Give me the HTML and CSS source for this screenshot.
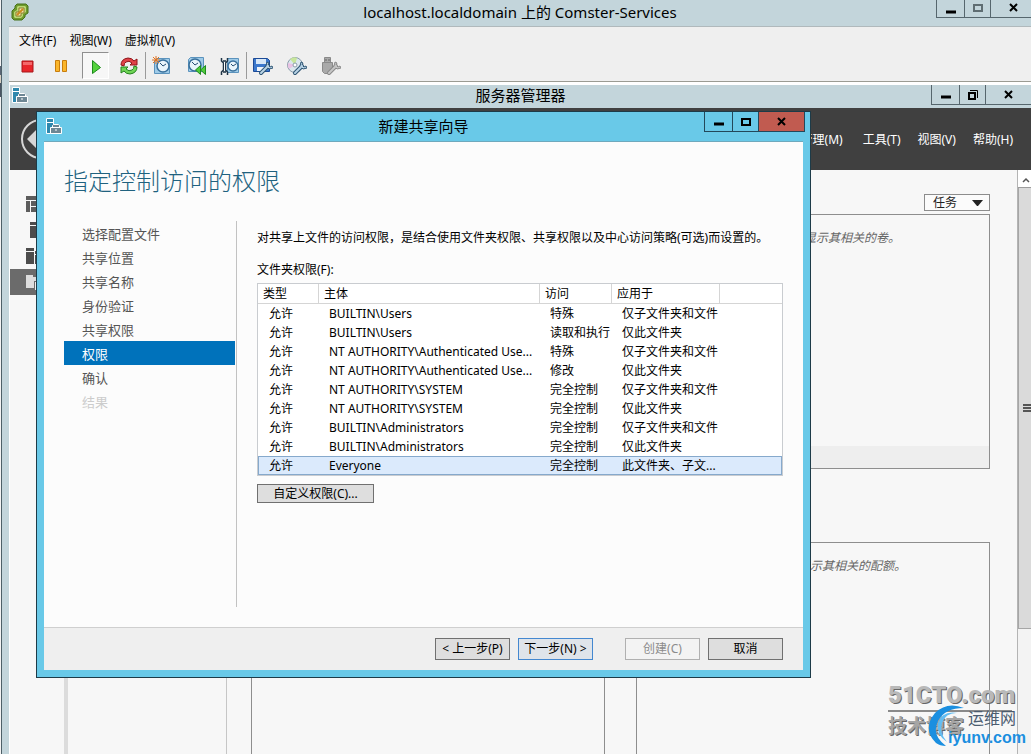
FILE: index.html
```html
<!DOCTYPE html>
<html lang="zh-CN">
<head>
    <meta charset="UTF-8">
    <title>localhost.localdomain 上的 Comster-Services</title>
    <link rel="stylesheet" href="styles.css">
</head>
<body>
<div class="console">
    <header class="titlebar console-title">
        <svg class="app-icon" width="18" height="18" viewBox="0 0 18 18">
            <path d="M6 1h9l2 2v7l-3 2v2l-3 3H3l-2-2V8l3-3V3z" fill="#6f9a2c" stroke="#47731b"/>
            <path d="M7 3h7l1 1v5l-3 2v2l-2 2H4l-1-1V9l3-2V4z" fill="#b9d873"/>
            <path d="M8 5h5v5h-3v3H5V9h3z" fill="#fbe9b0" stroke="#8a7a2a"/>
            <path d="M6 12l6-6" stroke="#c98a1d" stroke-width="2"/>
        </svg>
        <h1>localhost.localdomain 上的 Comster-Services</h1>
        <div class="win-buttons cut">
            <button aria-label="最小化"><svg width="12" height="12"><path d="M1 9h10" stroke="#000" stroke-width="3"/></svg></button>
            <button aria-label="最大化"><svg width="12" height="12"><path d="M2 2h8v6H2z" fill="none" stroke="#5f6d72" stroke-width="2"/></svg></button>
            <button aria-label="关闭"><svg width="12" height="12"><path d="M2 1l7 7M9 1L2 8" stroke="#000" stroke-width="2"/></svg></button>
        </div>
    </header>

    <nav class="menu">
        <a href="#">文件(F)</a>
        <a href="#">视图(W)</a>
        <a href="#">虚拟机(V)</a>
    </nav>

    <div class="toolbar">
        <div class="tools">
            <button aria-label="关机">
                <svg width="20" height="20"><path d="M5 5h11v11H5z" fill="#e8262b" stroke="#a8171b"/><path d="M6 6h9v3H6z" fill="#f4686a"/></svg>
            </button>
            <button aria-label="挂起">
                <svg width="20" height="20"><path d="M4.500 4.500h4v11h-4zM11.500 4.500h4v11h-4z" fill="#fbb62b" stroke="#c87d0c"/></svg>
            </button>
            <button class="pressed" aria-label="开机">
                <svg width="20" height="20"><path d="M7.500 4.500l8 7-8 6z" fill="#53d23c" stroke="#1c8a1b"/></svg>
            </button>
            <button aria-label="重启">
                <svg width="20" height="20">
                    <path d="M2 9q0-6 7-7 4 0 6 3l3-2v6h-7l2-2q-3-3-6-1-2 1-2 4z" fill="#e04247" stroke="#8f1418"/>
                    <path d="M18 11q0 6-7 7-4 0-6-3l-3 2v-6h7l-2 2q3 3 6 1 2-1 2-4z" fill="#6fd455" stroke="#23821f"/>
                </svg>
            </button>
        </div>
        <div class="tools">
            <button aria-label="创建快照">
                <svg width="20" height="20">
                    <path d="M4.500 2.500h13v15h-15v-13z" fill="#9fcbe8" stroke="#5b93bd"/>
                    <circle cx="11" cy="10" r="6" fill="#e8f4fb" stroke="#39709c" stroke-width="1.500"/>
                    <path d="M8 7l3 3 3-2" fill="none" stroke="#274f73"/>
                    <path d="M4 0v8M0 4h8M1 1l6 6M7 1L1 7" stroke="#e5731c"/>
                </svg>
            </button>
            <button aria-label="恢复快照">
                <svg width="20" height="20">
                    <path d="M4.500 1.500h13v14h-15v-12z" fill="#9fcbe8" stroke="#5b93bd"/>
                    <circle cx="9" cy="9" r="6" fill="#e8f4fb" stroke="#39709c" stroke-width="1.500"/>
                    <path d="M6 6l3 3 3-2" fill="none" stroke="#274f73"/>
                    <path d="M14.500 9.500v9l-5-4.500zM19.500 9.500v9l-5-4.500z" fill="#4fcc3c" stroke="#1f8a1e"/>
                </svg>
            </button>
            <button aria-label="快照管理器">
                <svg width="20" height="20">
                    <path d="M7.500 2.500h11v14h-11z" fill="#9fcbe8" stroke="#5b93bd"/>
                    <circle cx="13" cy="10" r="5" fill="#e8f4fb" stroke="#39709c" stroke-width="1.500"/>
                    <path d="M11 8l2 2 3-2" fill="none" stroke="#274f73"/>
                    <path d="M1.500 2v3l2 2v7l-2 2v3M7.500 2v3l-2 2v7l2 2v3M3 5h3M3 16h3" fill="none" stroke="#1f3446" stroke-width="1.500"/>
                    <path d="M4 6h1v9H4z" fill="#fff"/>
                </svg>
            </button>
        </div>
        <div class="tools">
            <button aria-label="软盘">
                <svg width="20" height="20">
                    <path d="M.500 2.500h14l2 2v11H.500z" fill="#3c78cc" stroke="#1c4a96"/>
                    <path d="M3 3h10v5H3z" fill="#d8e8f8"/><path d="M4 11h7v4H4z" fill="#eef4fa"/>
                    <path d="M8 17l7-7" stroke="#2f5674" stroke-width="4" stroke-linecap="round"/>
                    <path d="M14 6l-1 4 3 3 4-1-1-2-2 1-2-2 1-2z" fill="#b9d3e6" stroke="#2f5674"/>
                    <path d="M8 17l7-7" stroke="#b9d3e6" stroke-width="2" stroke-linecap="round"/>
                </svg>
            </button>
            <button aria-label="光盘">
                <svg width="20" height="20">
                    <circle cx="8" cy="9" r="7.500" fill="#dbe7ee" stroke="#8a9caa"/>
                    <path d="M8 9L3 3q4-3 7-1z" fill="#c8e69c"/><path d="M8 9l-6 4q-2-3-1-6z" fill="#e9c3e4"/>
                    <circle cx="8" cy="9" r="2" fill="#fff" stroke="#8a9caa"/>
                    <path d="M8 17l7-7" stroke="#2f5674" stroke-width="4" stroke-linecap="round"/>
                    <path d="M14 6l-1 4 3 3 4-1-1-2-2 1-2-2 1-2z" fill="#b9d3e6" stroke="#2f5674"/>
                    <path d="M8 17l7-7" stroke="#b9d3e6" stroke-width="2" stroke-linecap="round"/>
                </svg>
            </button>
            <button aria-label="USB" disabled>
                <svg width="20" height="20">
                    <path d="M3.500 1.500h6v5h-6zM1.500 6.500h10v9h-3l-2 2h-3l-2-2z" fill="#a9a9a9" stroke="#8a8a8a"/>
                    <path d="M5 3v2M8 3v2" stroke="#666"/>
                    <path d="M8 17l7-7" stroke="#8a8a8a" stroke-width="4" stroke-linecap="round"/>
                    <path d="M14 6l-1 4 3 3 4-1-1-2-2 1-2-2 1-2z" fill="#c6c6c6" stroke="#8a8a8a"/>
                    <path d="M8 17l7-7" stroke="#c6c6c6" stroke-width="2" stroke-linecap="round"/>
                </svg>
            </button>
        </div>
    </div>

    <!-- 虚拟机桌面 -->
    <div class="desktop">
        <header class="titlebar manager-title">
            <svg class="app-icon" width="16" height="16" viewBox="0 0 16 16">
                <path d="M.500.500h7v15h-7z" fill="#2f88ad" stroke="#fff"/><path d="M1 4.500h6" stroke="#fff"/>
                <path d="M4.500 9.500h11v6h-11z" fill="#6e8794" stroke="#fff"/>
                <path d="M6.500 9V7.500l1-1h5l1 1V9" fill="#6e8794" stroke="#fff"/><path d="M9 12h2" stroke="#fff"/>
            </svg>
            <h2>服务器管理器</h2>
            <div class="win-buttons">
                <button aria-label="最小化"><svg width="12" height="12"><path d="M1 8h10" stroke="#000" stroke-width="3"/></svg></button>
                <button aria-label="还原"><svg width="12" height="12"><path d="M2 4h6v6H2z" fill="none" stroke="#000" stroke-width="2"/><path d="M3 1.500h7.500V9" fill="none" stroke="#000"/></svg></button>
                <button aria-label="关闭"><svg width="12" height="12"><path d="M2 2l7 7M9 2L2 9" stroke="#000" stroke-width="2"/></svg></button>
            </div>
        </header>

        <div class="manager-head">
            <button class="back" aria-label="后退">
                <svg width="42" height="42"><circle cx="21" cy="21" r="19" fill="none" stroke="#d6d6d6" stroke-width="2"/><path d="M7 21l10-10v7h17v6H17v7z" fill="#d6d6d6"/></svg>
            </button>
            <nav class="manager-menu">
                <a href="#">管理(M)</a>
                <div class="menu-group">
                    <a href="#">工具(T)</a>
                    <a href="#">视图(V)</a>
                    <a href="#">帮助(H)</a>
                </div>
            </nav>
        </div>

        <div class="manager-body">
            <ul class="side">
                <li><svg width="16" height="16"><path d="M0 0h16v4H0zM0 5h4v11H0zM5 5h11v5H5zM5 11h11v5H5z" fill="#5c5c5c"/></svg></li>
                <li><svg width="16" height="16"><path d="M4 0h10v3H4zM4 4h10v12H4z" fill="#4c4c4c"/></svg></li>
                <li><svg width="16" height="16"><path d="M0 0h8v3H0zM0 4h8v12H0zM9 3h7v3H9zM9 7h7v9H9z" fill="#4c4c4c"/></svg></li>
                <li class="current"><svg width="16" height="16"><path d="M0 1h7v2h5v4H8v7H0z" fill="#ddd"/><path d="M9 8h7v8H9z" fill="#eee"/></svg></li>
            </ul>
            <div class="subnav"></div>
            <main class="tiles">
                <section class="tile"></section>
                <section class="tile">
                    <div class="tasks">
                        <select aria-label="任务"><option>任务</option></select>
                        <svg width="11" height="6"><path d="M0 0h11L6 6H5z" fill="#222"/></svg>
                    </div>
                    <div class="pane">
                        <p>显示其相关的卷。</p>
                        <div class="pane-foot"></div>
                    </div>
                </section>
                <section class="tile open"><div class="pane"></div></section>
                <section class="tile open"><div class="pane"><p>显示其相关的配额。</p></div></section>
            </main>
            <div class="scroll">
                <div class="scroll-up"><svg width="8" height="6"><path d="M1 5l3-3 3 3" fill="none" stroke="#555" stroke-width="1.500"/></svg></div>
                <div class="thumb"><svg width="8" height="9"><path d="M0 1h8M0 4h8M0 7h8" stroke="#555" stroke-width="2"/></svg></div>
            </div>
        </div>

        <!-- 新建共享向导 -->
        <div class="dialog" role="dialog" aria-labelledby="wizard-title">
            <header class="titlebar dialog-title">
                <svg class="app-icon" width="16" height="16" viewBox="0 0 16 16">
                    <path d="M.500.500h7v15h-7z" fill="#2f88ad" stroke="#fff"/><path d="M1 4.500h6" stroke="#fff"/>
                    <path d="M4.500 9.500h11v6h-11z" fill="#6e8794" stroke="#fff"/>
                    <path d="M6.500 9V7.500l1-1h5l1 1V9" fill="#6e8794" stroke="#fff"/><path d="M9 12h2" stroke="#fff"/>
                </svg>
                <h2 id="wizard-title">新建共享向导</h2>
                <div class="win-buttons">
                    <button aria-label="最小化"><svg width="12" height="12"><path d="M1 8h10" stroke="#000" stroke-width="3"/></svg></button>
                    <button aria-label="最大化"><svg width="12" height="12"><path d="M2 3h8v6H2z" fill="none" stroke="#000" stroke-width="2"/></svg></button>
                    <button class="close" aria-label="关闭"><svg width="12" height="12"><path d="M2 2l7 7M9 2L2 9" stroke="#000" stroke-width="2"/></svg></button>
                </div>
            </header>
            <div class="dialog-body">
                <h3>指定控制访问的权限</h3>
                <div class="wizard">
                    <ol class="steps">
                        <li>选择配置文件</li>
                        <li>共享位置</li>
                        <li>共享名称</li>
                        <li>身份验证</li>
                        <li>共享权限</li>
                        <li class="current">权限</li>
                        <li>确认</li>
                        <li class="disabled">结果</li>
                    </ol>
                    <div class="page">
                        <p>对共享上文件的访问权限，是结合使用文件夹权限、共享权限以及中心访问策略(可选)而设置的。</p>
                        <p id="perm-label" class="label">文件夹权限(F):</p>
                        <table class="perms" aria-labelledby="perm-label">
                            <colgroup><col class="c-type"><col><col class="c-access"><col class="c-apply"><col class="c-rest"></colgroup>
                            <thead>
                            <tr><th>类型</th><th>主体</th><th>访问</th><th>应用于</th><th></th></tr>
                            </thead>
                            <tbody>
                            <tr><td>允许</td><td>BUILTIN\Users</td><td>特殊</td><td>仅子文件夹和文件</td><td></td></tr>
                            <tr><td>允许</td><td>BUILTIN\Users</td><td>读取和执行</td><td>仅此文件夹</td><td></td></tr>
                            <tr><td>允许</td><td>NT AUTHORITY\Authenticated Use...</td><td>特殊</td><td>仅子文件夹和文件</td><td></td></tr>
                            <tr><td>允许</td><td>NT AUTHORITY\Authenticated Use...</td><td>修改</td><td>仅此文件夹</td><td></td></tr>
                            <tr><td>允许</td><td>NT AUTHORITY\SYSTEM</td><td>完全控制</td><td>仅子文件夹和文件</td><td></td></tr>
                            <tr><td>允许</td><td>NT AUTHORITY\SYSTEM</td><td>完全控制</td><td>仅此文件夹</td><td></td></tr>
                            <tr><td>允许</td><td>BUILTIN\Administrators</td><td>完全控制</td><td>仅子文件夹和文件</td><td></td></tr>
                            <tr><td>允许</td><td>BUILTIN\Administrators</td><td>完全控制</td><td>仅此文件夹</td><td></td></tr>
                            <tr class="selected"><td>允许</td><td>Everyone</td><td>完全控制</td><td>此文件夹、子文...</td><td></td></tr>
                            </tbody>
                        </table>
                        <button class="btn custom">自定义权限(C)...</button>
                    </div>
                </div>
            </div>
            <footer class="dialog-foot">
                <div class="btn-pair">
                    <button class="btn">&lt; 上一步(P)</button>
                    <button class="btn default">下一步(N) &gt;</button>
                </div>
                <div class="btn-pair">
                    <button class="btn" disabled>创建(C)</button>
                    <button class="btn">取消</button>
                </div>
            </footer>
        </div>
    </div>
</div>

<!-- 水印 -->
<div class="watermark">
    <div class="mark-name">51CTO.com</div>
    <div class="mark-blog">技术博客</div>
    <svg class="swoosh" width="40" height="42">
        <path d="M37 3Q20-4 8 8Q-5 24 9 38Q13 41 19 41Q4 30 11 16Q18 3 37 3z" fill="#1b8fe0"/>
        <path d="M31 8Q19 7 15 18Q12 28 20 37Q9 30 11 18Q15 5 31 8z" fill="#63bdf2"/>
    </svg>
    <div class="mark-site">运维网</div>
    <div class="mark-url">iyunv.com</div>
</div>
</body>
</html>
```
FILE: styles.css
```css
* {
    margin: 0;
    padding: 0;
    box-sizing: border-box;
}

body {
    height: 100vh;
    padding-left: 1px;
    overflow: hidden;
    font-family: "Noto Sans", "Noto Sans CJK SC", sans-serif;
    font-size: 12px;
    line-height: 18px;
    color: #000;
    background: linear-gradient(#f4f4f4 66px, #5a6675 66px, #5a6675 75px, #d8d2c4 75px, #d8d2c4 83px, #4a5563 83px, #4a5563 97px, #f4f4f4 97px);
}

svg {
    display: block;
}

a {
    color: inherit;
    text-decoration: none;
}

ul, ol {
    list-style: none;
}

button {
    font: inherit;
    color: inherit;
    background: none;
    border: none;
}

/* 控制台窗口 */
.console {
    height: 100%;
    border-left: 1px solid #4e6068;
    padding-left: 7px;
    background: #c3d5db;
    display: flex;
    flex-direction: column;
}

.titlebar {
    display: grid;
    grid-template-columns: 1fr auto 1fr;
    grid-template-rows: 100%;
    align-items: center;
    padding-bottom: 3px;
    background: #c3d5db;
}

.titlebar h1, .titlebar h2 {
    font-size: 15px;
    font-weight: normal;
    line-height: 22px;
}

.console-title {
    height: 27px;
    border-bottom: 1px solid #b0b9bc;
}

.console-title .app-icon {
    margin-left: 2px;
}

.win-buttons {
    display: flex;
    justify-self: end;
    align-self: start;
    border: 1px solid #56666d;
    border-width: 0 0 1px 1px;
}

.win-buttons.cut {
    margin-right: -6px;
}

.win-buttons button {
    width: 28px;
    height: 19px;
    display: flex;
    align-items: center;
    justify-content: center;
    border-right: 1px solid #56666d;
}

.win-buttons button:nth-child(2) {
    width: 26px;
}

.win-buttons button:last-child {
    width: 46px;
}

.win-buttons.cut button {
    height: 17px;
}

.menu {
    display: flex;
    gap: 13px;
    padding: 5px 10px 2px;
    background: #efefef;
}

.toolbar {
    display: flex;
    padding: 0 5px 2px;
    background: #efefef;
    border-bottom: 1px solid #9b9b93;
}

.tools {
    display: flex;
    gap: 7px;
    padding-right: 2px;
    margin-right: 3px;
    border-right: 1px solid #9a9a9a;
}

.tools:last-child {
    border: none;
}

.tools button {
    width: 27px;
    height: 27px;
    display: flex;
    align-items: center;
    padding-left: 3px;
}

.tools .pressed {
    padding-left: 2px;
    background: #f7f7f7;
    border: 1px solid #8f8f8f;
    border-right-color: #fff;
    border-bottom-color: #fff;
}

/* 服务器管理器 */
.desktop {
    flex: 1;
    min-height: 0;
    border-left: 1px solid #fff;
    border-top: 3px solid #fff;
    display: flex;
    flex-direction: column;
    position: relative;
}

.manager-title {
    height: 23px;
}

.manager-title .app-icon {
    margin-left: 2px;
}

.manager-title .win-buttons {
    margin-right: -1px;
}

.manager-head {
    height: 62px;
    background: #404040;
    color: #fff;
    display: flex;
    align-items: center;
    justify-content: space-between;
    padding: 0 18px 0 10px;
}

.manager-menu {
    display: flex;
    gap: 20px;
    padding-top: 2px;
}

.menu-group {
    display: flex;
    gap: 17px;
}

.manager-body {
    flex: 1;
    min-height: 0;
    display: flex;
    background: #f7f7f7;
}

.side {
    width: 54px;
    padding-top: 21px;
}

.side li {
    height: 26px;
    padding: 5px 16px;
}

.side .current {
    background: #6b6b6b;
}

.subnav {
    width: 163px;
    border-left: 4px solid #dcdcdc;
    border-right: 1px solid #c6c6c6;
}

.tiles {
    flex: 1;
    display: grid;
    grid-template-columns: 1fr 1fr;
    grid-template-rows: auto 1fr;
    gap: 73px 31px;
    padding: 24px 27px 0 24px;
}

.tile {
    display: flex;
    flex-direction: column;
    gap: 3px;
}

.tasks {
    width: 66px;
    height: 17px;
    align-self: flex-end;
    display: grid;
    align-items: center;
    border: 1px solid #8c8c8c;
    background: #fbfbfb;
}

.tasks select, .tasks svg {
    grid-area: 1 / 1;
}

.tasks select {
    appearance: none;
    border: none;
    background: none;
    font: inherit;
    line-height: 15px;
    height: 15px;
    padding-left: 8px;
    color: #222;
}

.tasks svg {
    justify-self: end;
    margin-right: 6px;
    pointer-events: none;
}

.pane {
    height: 255px;
    border: 1px solid #8e8e8e;
    display: flex;
    flex-direction: column;
    justify-content: space-between;
}

.pane p {
    padding: 14px 0 0 167px;
    font-style: italic;
    color: #666;
}

.pane-foot {
    height: 22px;
    background: #eee;
}

.open .pane {
    flex: 1;
    border-bottom: none;
}

.open .pane p {
    padding-left: 161px;
}

.scroll {
    width: 14px;
    background: #f3f3f3;
    border-left: 1px solid #b4b4b4;
}

.scroll-up {
    height: 18px;
    padding: 7px 0 0 4px;
    background: #fff;
    border-bottom: 1px solid #9c9c9c;
}

.thumb {
    height: 441px;
    display: flex;
    align-items: center;
    padding-left: 4px;
    background: #dadada;
    border-left: 1px solid #a6a6a6;
    border-bottom: 1px solid #a6a6a6;
}

/* 向导对话框 */
.dialog {
    position: absolute;
    left: 26px;
    right: 220px;
    top: 26px;
    padding: 0 7px 7px;
    border: 1px solid #1d3b48;
    background: #69c9e8;
}

.dialog-title {
    height: 29px;
    padding-bottom: 1px;
    background: none;
}

.dialog-title .app-icon {
    margin-left: 2px;
}

.dialog-title .win-buttons {
    margin-right: -2px;
    border-color: #23485a;
}

.dialog-title .win-buttons button {
    border-color: #23485a;
}

.dialog-title .close {
    background: #c15b50;
}

.dialog-body {
    padding: 22px 20px 20px;
    background: #fcfcfc;
    border-top: 1px solid #6fa9bd;
}

.dialog-body h3 {
    font-size: 24px;
    font-weight: 300;
    line-height: 32px;
    color: #20627f;
    font-family: "Noto Sans CJK SC", sans-serif;
}

.wizard {
    display: flex;
    gap: 20px;
    min-height: 386px;
    margin-top: 25px;
}

.steps {
    width: 173px;
    padding-right: 1px;
    border-right: 1px solid #c2c2c2;
    font-size: 13px;
    line-height: 26px;
    color: #555;
}

.steps li {
    height: 24px;
    padding: 0 18px;
}

.steps .current {
    background: #0072bb;
    color: #fff;
}

.steps .disabled {
    color: #ccc;
}

.page {
    flex: 1;
    min-width: 0;
    padding-top: 8px;
}

.label {
    margin: 14px 0 4px;
}

.perms {
    width: 100%;
    table-layout: fixed;
    border-collapse: separate;
    border-spacing: 0;
    background: #fff;
    border: 1px solid #c9ccd0;
}

.c-type {
    width: 61px;
}

.c-access {
    width: 72px;
}

.c-apply {
    width: 108px;
}

.c-rest {
    width: 62px;
}

.perms th, .perms td {
    height: 19px;
    line-height: 17px;
    text-align: left;
    font-weight: normal;
    white-space: nowrap;
}

.perms th {
    height: 20px;
    padding-left: 5px;
    border-right: 1px solid #d5d5d5;
    border-bottom: 1px solid #d5d5d5;
}

.perms th:last-child {
    border-right: none;
}

.perms td {
    padding-left: 10px;
    border: 1px solid transparent;
    border-width: 1px 0;
}

.perms td:first-child {
    border-left-width: 1px;
}

.perms td:last-child {
    border-right-width: 1px;
}

.perms .selected td {
    background: #dbeafc;
    border-color: #86a9cc;
}

.btn {
    width: 75px;
    height: 22px;
    line-height: 18px;
    white-space: nowrap;
    background: #dedede;
    border: 1px solid #707070;
}

.btn.custom {
    width: 117px;
    height: 19px;
    line-height: 15px;
    margin-top: 8px;
}

.btn.default {
    border-color: #4488d0;
    background: #dfe4ea;
}

.btn:disabled {
    color: #8b8b8b;
    background: #f3f3f3;
    border-color: #b0b0b0;
}

.dialog-foot {
    display: flex;
    justify-content: flex-end;
    gap: 32px;
    padding: 10px 20px;
    background: #efefef;
    border-top: 1px solid #cfcfcf;
}

.btn-pair {
    display: flex;
    gap: 8px;
}

/* 水印 */
.watermark {
    position: absolute;
    right: 5px;
    bottom: 4px;
    width: 138px;
    height: 70px;
}

.mark-name {
    font-family: Roboto, sans-serif;
    font-size: 24px;
    font-weight: 900;
    line-height: 30px;
    color: #b9b9b9;
    text-shadow: 1px 1px 0 #666;
    border-bottom: 2px solid #8a8a8a;
    margin-right: 14px;
}

.mark-blog {
    font-size: 19px;
    font-weight: bold;
    line-height: 28px;
    color: #a5a5a5;
    text-shadow: 1px 1px 0 #666;
}

.swoosh {
    position: absolute;
    left: 39px;
    top: 25px;
}

.mark-site {
    position: absolute;
    left: 80px;
    top: 28px;
    font-size: 16px;
    line-height: 20px;
    color: #4b5c70;
}

.mark-url {
    position: absolute;
    right: 0;
    bottom: 2px;
    font-family: "Liberation Sans", sans-serif;
    font-size: 16px;
    font-weight: bold;
    line-height: 20px;
    color: #1b8fe0;
}
```
